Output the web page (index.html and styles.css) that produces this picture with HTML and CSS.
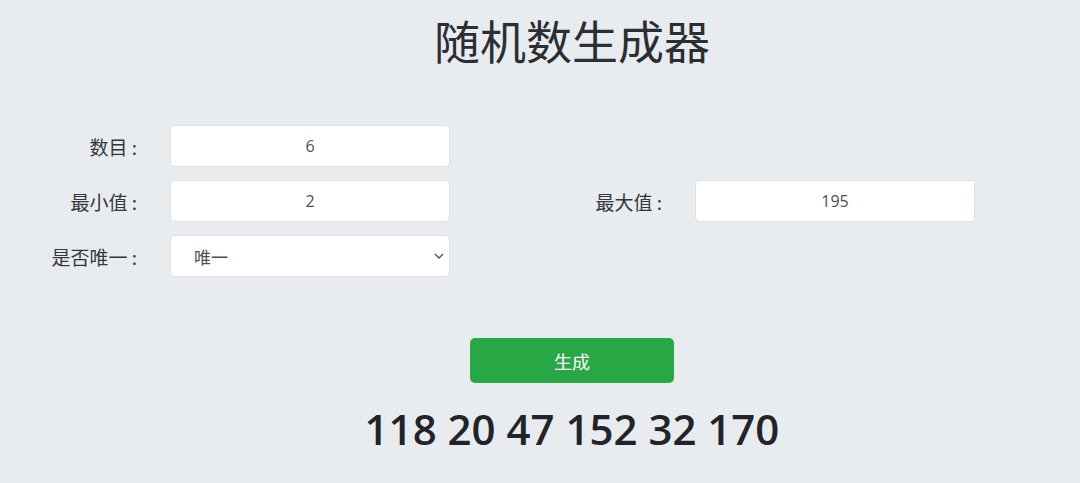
FILE: index.html
```html
<!DOCTYPE html>
<html lang="zh-CN">

<head>
    <meta charset="UTF-8">
    <meta name="viewport" content="width=device-width, initial-scale=1.0">
    <title>随机数生成器</title>
    <link rel="stylesheet" href="styles.css">
</head>

<body>
    <h1 class="title">随机数生成器</h1>

    <form class="form" onsubmit="return false">
        <div class="form-row">
            <div class="field">
                <label for="count">数目 :</label>
                <input id="count" type="text" value="6">
            </div>
        </div>
        <div class="form-row">
            <div class="field">
                <label for="min">最小值 :</label>
                <input id="min" type="text" value="2">
            </div>
            <div class="field">
                <label for="max">最大值 :</label>
                <input id="max" type="text" value="195">
            </div>
        </div>
        <div class="form-row">
            <div class="field">
                <label for="unique">是否唯一 :</label>
                <div class="select-wrap">
                    <select id="unique">
                        <option value="1">唯一</option>
                        <option value="0">不唯一</option>
                    </select>
                    <svg class="chevron" width="10" height="6" viewBox="0 0 10 6">
                        <path d="M1 1l4 4 4-4" fill="none" stroke="#495057" stroke-width="1.3" />
                    </svg>
                </div>
            </div>
        </div>
    </form>

    <div class="actions">
        <button class="btn-generate" type="button">生成</button>
    </div>

    <div class="result">118 20 47 152 32 170</div>
</body>

</html>
```

FILE: styles.css
```css
body {
    margin: 0;
    padding: 0;
    font-family: "Open Sans", "Noto Sans CJK SC", sans-serif;
    color: #212529;
    background: #e9ecef;
}

.title {
    margin: 12px 0 0;
    padding-left: 64px;
    text-align: center;
    font-family: "Noto Sans CJK SC", sans-serif;
    font-size: 46px;
    font-weight: 400;
    line-height: 54px;
    color: #2b2f33;
}

.form {
    margin-top: 59px;
    display: flex;
    flex-direction: column;
    gap: 13px;
}

.form-row {
    display: flex;
    gap: 75px;
}

.field {
    display: flex;
    align-items: center;
    gap: 33px;
}

.field label {
    width: 137px;
    text-align: right;
    font-family: "Noto Sans CJK SC", sans-serif;
    font-size: 19px;
    color: #33383d;
}

.field input,
.field select {
    box-sizing: border-box;
    width: 280px;
    height: 42px;
    border: 1px solid #dde1e5;
    border-radius: 4px;
    background: #ffffff;
    font-family: "Open Sans", "Noto Sans CJK SC", sans-serif;
    font-size: 16px;
    color: #495057;
    outline: none;
}

.field input {
    text-align: center;
}

.select-wrap {
    position: relative;
}

.field select {
    appearance: none;
    -webkit-appearance: none;
    padding: 0 23px;
    font-family: "Noto Sans CJK SC", sans-serif;
    font-size: 17px;
}

.chevron {
    position: absolute;
    right: 6px;
    top: 18px;
    pointer-events: none;
}

.actions {
    margin-top: 61px;
    padding-left: 64px;
    text-align: center;
}

.btn-generate {
    width: 204px;
    height: 45px;
    border: none;
    border-radius: 5px;
    background-color: #28a745;
    color: #ffffff;
    font-family: "Noto Sans CJK SC", sans-serif;
    font-size: 18px;
    cursor: pointer;
}

.result {
    margin-top: 21px;
    padding-left: 64px;
    text-align: center;
    font-size: 42px;
    font-weight: 600;
    line-height: 50px;
    color: #212529;
}
```
